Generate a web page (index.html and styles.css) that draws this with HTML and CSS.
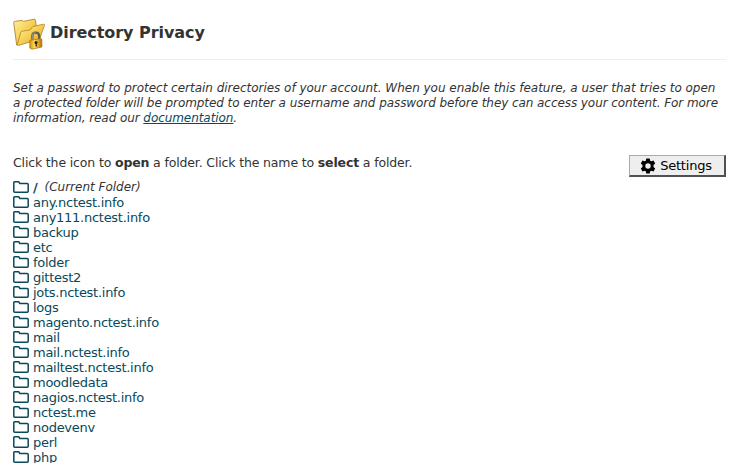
FILE: index.html
```html
<!DOCTYPE html>
<html lang="en">
<head>
    <meta charset="UTF-8">
    <meta name="viewport" content="width=device-width, initial-scale=1.0">
    <title>Directory Privacy</title>
    <link rel="stylesheet" href="styles.css">
</head>
<body>
    <svg width="0" height="0" class="symbols">
        <symbol id="folder" viewBox="0 0 16 12">
            <path d="M1.6 .8H5.4Q6 .8 6.2 1.5L6.8 2.5H14.2Q15.2 2.5 15.2 3.4V10.3Q15.2 11.2 14.2 11.2H1.8Q.8 11.2 .8 10.3V1.7Q.8 .8 1.6 .8Z" fill="none" stroke="currentColor" stroke-width="1.5"/>
        </symbol>
    </svg>

    <div class="page-header">
        <svg class="page-icon" width="33" height="32" viewBox="0 0 33 32">
            <defs>
                <linearGradient id="gold" x1="0" y1="0" x2="1" y2="1">
                    <stop offset="0" stop-color="#fff0a0"/>
                    <stop offset=".5" stop-color="#f5cf52"/>
                    <stop offset="1" stop-color="#d99b1c"/>
                </linearGradient>
                <linearGradient id="lockGold" x1="0" y1="0" x2="1" y2="0">
                    <stop offset="0" stop-color="#d9930f"/>
                    <stop offset=".4" stop-color="#ffdd58"/>
                    <stop offset="1" stop-color="#b87306"/>
                </linearGradient>
            </defs>
            <path d="M.7 4.5Q.6 3.6 1.5 3.4L9 2.4 10.5 3.4 21 1.2Q22.3 1 22.5 2.2L24 15 6 26 3.7 27.2Z" fill="url(#gold)" stroke="#b08335" stroke-width=".9"/>
            <path d="M4.2 26.8L7.7 14.5Q8 13.4 9.2 13.2L17 12 20 8.5 30.5 6.2Q31.9 6 31.5 7.3L26.5 21 6 27.3Z" fill="url(#gold)" stroke="#b98a2c" stroke-width=".9"/>
            <path d="M19.3 21.5V18.2Q19.3 14.6 22.7 14.6Q26.2 14.6 26.2 18.2V21" fill="none" stroke="#5e5b50" stroke-width="2.3"/>
            <path d="M19.3 21V18.2Q19.3 14.6 22.7 14.6" fill="none" stroke="#b9b6a8" stroke-width=".7"/>
            <path d="M16.8 22.3L27.7 20.6 28.9 21.3V29L19 31.2 16.8 30Z" fill="url(#lockGold)" stroke="#a86d0b" stroke-width=".7"/>
            <circle cx="23" cy="24.6" r="1.5" fill="#2b1c05"/>
            <path d="M22.6 25L22.5 28.5 24 28.2 23.6 25Z" fill="#2b1c05"/>
        </svg>
        <h1>Directory Privacy</h1>
    </div>

    <p class="description">
        Set a password to protect certain directories of your account. When you enable this feature, a user that tries to open<br>
        <span class="tight">a protected folder will be prompted to enter a username and password before they can access your content. For more</span><br>
        <span class="tight">information, read our <a href="#">documentation</a>.</span>
    </p>

    <div class="toolbar">
        <p>Click the icon to <strong>open</strong> a folder. Click the name to <strong>select</strong> a folder.</p>
        <button type="button" class="settings-btn">
            <svg width="16" height="16" viewBox="0 0 16 16">
                <path fill="#000" fill-rule="evenodd" d="M6.3 0h3.4l.5 2.2 1.1.6 2.2-.7 1.7 2.9-1.7 1.6v1.8l1.7 1.6-1.7 2.9-2.2-.7-1.1.6-.5 2.2H6.3l-.5-2.2-1.1-.6-2.2.7L.8 10l1.7-1.6V6.6L.8 5l1.7-2.9 2.2.7 1.1-.6zM8 4.8a2.7 2.7 0 1 0 0 5.4 2.7 2.7 0 0 0 0-5.4z" transform="translate(0 .5)"/>
            </svg>
            <span>Settings</span>
        </button>
    </div>

    <ul class="folders">
        <li><svg><use href="#folder"/></svg><a href="#"><b>/</b></a><em>(Current Folder)</em></li>
        <li><svg><use href="#folder"/></svg><a href="#">any.nctest.info</a></li>
        <li><svg><use href="#folder"/></svg><a href="#">any111.nctest.info</a></li>
        <li><svg><use href="#folder"/></svg><a href="#">backup</a></li>
        <li><svg><use href="#folder"/></svg><a href="#">etc</a></li>
        <li><svg><use href="#folder"/></svg><a href="#">folder</a></li>
        <li><svg><use href="#folder"/></svg><a href="#">gittest2</a></li>
        <li><svg><use href="#folder"/></svg><a href="#">jots.nctest.info</a></li>
        <li><svg><use href="#folder"/></svg><a href="#">logs</a></li>
        <li><svg><use href="#folder"/></svg><a href="#">magento.nctest.info</a></li>
        <li><svg><use href="#folder"/></svg><a href="#">mail</a></li>
        <li><svg><use href="#folder"/></svg><a href="#">mail.nctest.info</a></li>
        <li><svg><use href="#folder"/></svg><a href="#">mailtest.nctest.info</a></li>
        <li><svg><use href="#folder"/></svg><a href="#">moodledata</a></li>
        <li><svg><use href="#folder"/></svg><a href="#">nagios.nctest.info</a></li>
        <li><svg><use href="#folder"/></svg><a href="#">nctest.me</a></li>
        <li><svg><use href="#folder"/></svg><a href="#">nodevenv</a></li>
        <li><svg><use href="#folder"/></svg><a href="#">perl</a></li>
        <li><svg><use href="#folder"/></svg><a href="#">php</a></li>
    </ul>
</body>
</html>
```
FILE: styles.css
```css
* {
    box-sizing: border-box;
}
body {
    margin: 0;
    padding: 17px 9px 0 13px;
    height: 463px;
    overflow: hidden;
    background-color: #fff;
    color: #333;
    font-family: Verdana, "DejaVu Sans", sans-serif;
    font-size: 13px;
    line-height: 15px;
}
.symbols {
    display: none;
}
.page-header {
    display: flex;
    gap: 4px;
    height: 43px;
    border-bottom: 1px solid #eee;
}
.page-icon {
    margin-top: 1px;
}
h1 {
    margin: 6px 0 0;
    font-size: 16px;
    line-height: 20px;
    letter-spacing: -0.05px;
}
.description {
    margin: 21px 0 0;
    font-size: 12px;
    font-style: italic;
    letter-spacing: -0.02px;
    white-space: nowrap;
}
.description .tight {
    letter-spacing: -0.07px;
}
a {
    color: #08495b;
}
.toolbar {
    display: flex;
    justify-content: space-between;
    align-items: flex-start;
    margin-top: 29px;
    height: 25px;
}
.toolbar p {
    margin: 0;
    font-size: 12.5px;
    letter-spacing: -0.15px;
}
.settings-btn {
    display: flex;
    align-items: center;
    justify-content: center;
    gap: 4px;
    width: 97px;
    height: 22px;
    padding: 0 2px 0 0;
    border: 1px solid;
    border-width: 1px 2px 2px 1px;
    border-color: #aaa #505050 #505050 #aaa;
    background-color: #eee;
    color: #000;
    font-family: inherit;
    font-size: 13px;
    letter-spacing: -0.2px;
}
.folders {
    margin: 0;
    padding: 0;
    list-style: none;
    letter-spacing: -0.27px;
}
.folders li {
    display: flex;
    height: 15px;
}
.folders svg {
    width: 16px;
    height: 12px;
    margin: 1px 4px 0 0;
    color: #08495b;
}
.folders a {
    text-decoration: none;
}
.folders em {
    margin-left: 7px;
    font-size: 12px;
    letter-spacing: 0;
}
```
